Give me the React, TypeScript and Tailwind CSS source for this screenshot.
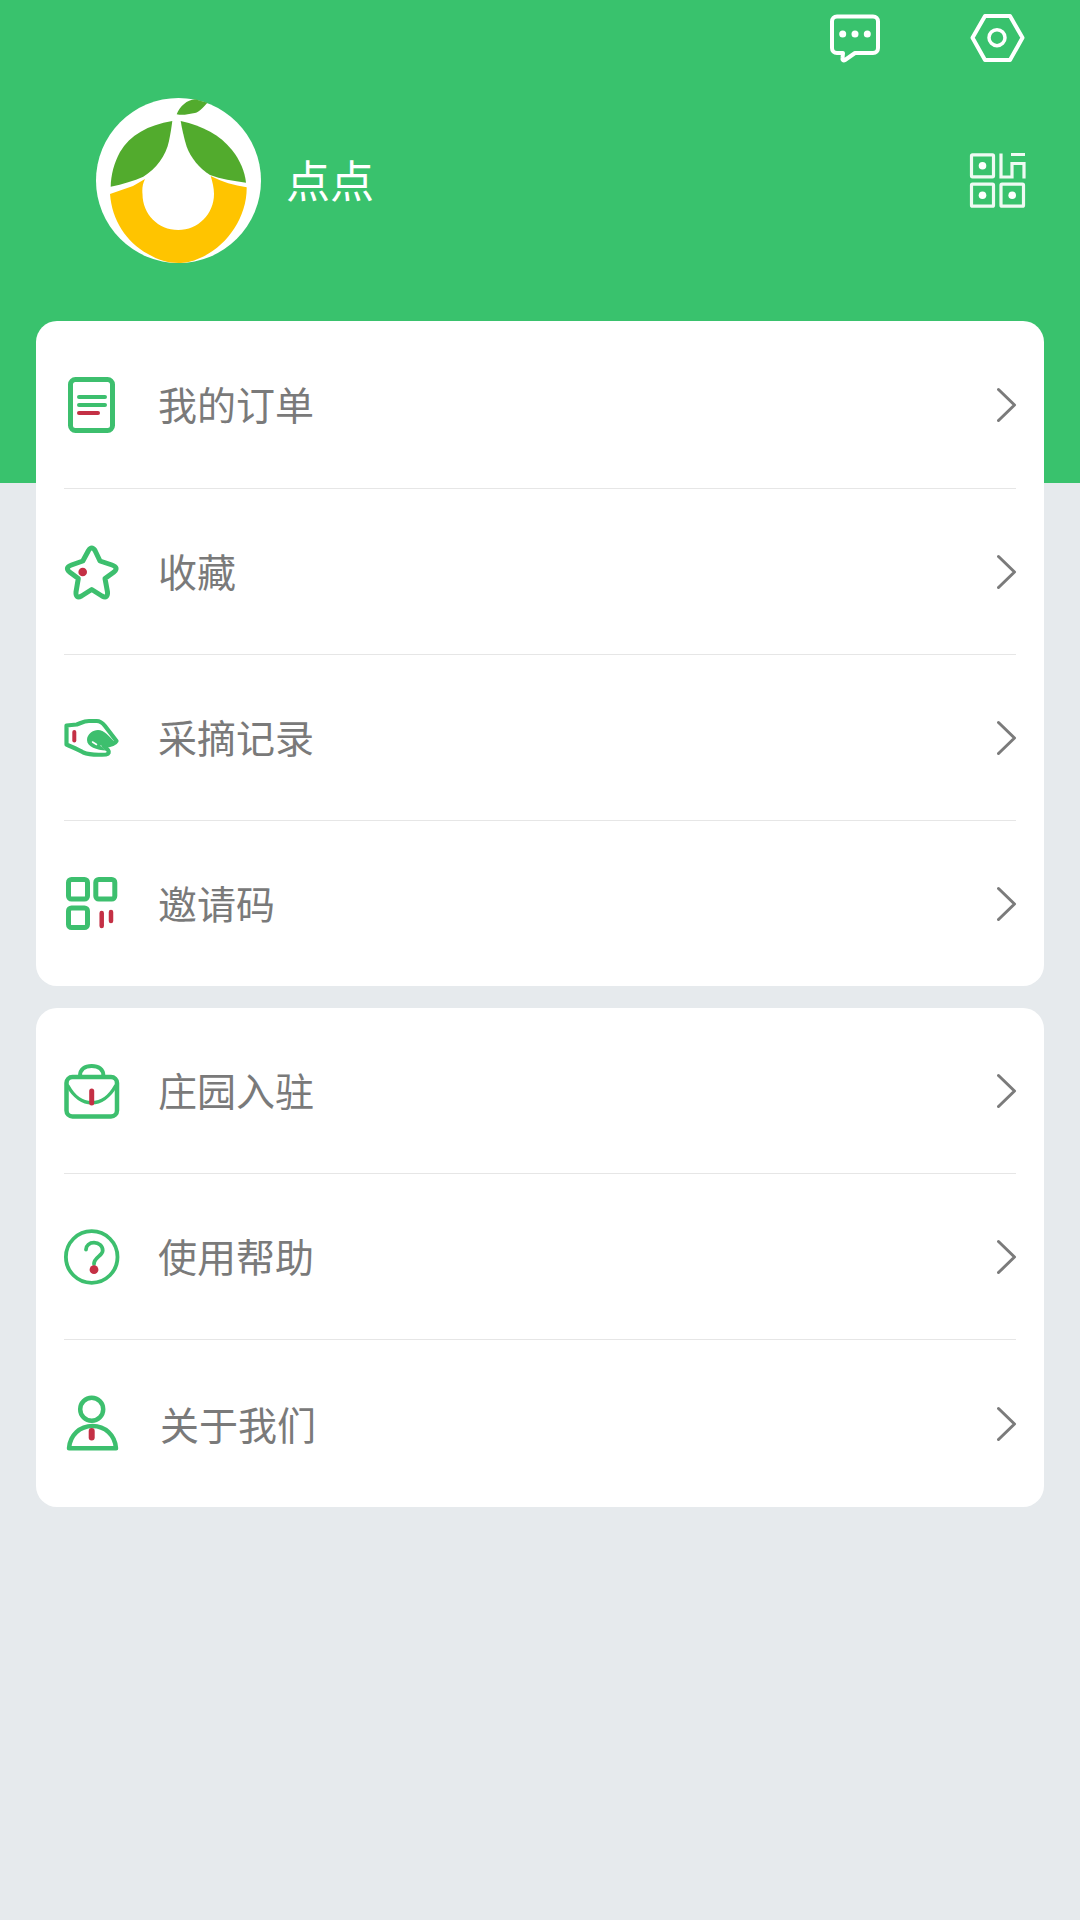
import React from "react";

const G = "#3dbf6e";
const R = "#c43045";

const Svg = ({ children }: { children: React.ReactNode }) => (
  <svg width="64" height="64" viewBox="0 0 64 64" fill="none" stroke={G} strokeWidth="5" strokeLinecap="round" strokeLinejoin="round" className="shrink-0">
    {children}
  </svg>
);

const DocIcon = () => (
  <Svg>
    <rect x="10.5" y="6.5" width="42" height="51" rx="5" />
    <path d="M19 24H45M19 32H45" strokeWidth="4" />
    <path d="M19 40H38" stroke={R} strokeWidth="4" />
  </Svg>
);
const StarIcon = () => (
  <Svg>
    <path d="M28.5 10.5Q31.7 5.5 35 10.5L40 21L52 25Q59 27.5 54 32L45 38.5L47.5 52Q48 59 42 56L31.7 49.5L21.5 56Q15.5 59 16 52L18.3 38.5L9.5 32Q4.5 27.5 11.5 25L22.8 21Z" strokeWidth="5" />
    <circle cx="22.7" cy="32" r="4.3" fill={R} stroke="none" />
  </Svg>
);
const HandIcon = () => (
  <Svg>
    <path d="M6.5 19.5L16.7 18.5C21 17 24 15 29 15H36.7C40 15 43 17.5 45 20L56.5 35C55 38 49 39.5 43.5 40L48 44C49.5 46 49 48 46 48.5C38 49 29 49 23.3 46.5C19 44 13 41.5 6.5 38.5Z" strokeWidth="4.2" />
    <path d="M27 34C27 28 33 24 38 24C44 24 49 30 55 36.5C49 39.5 43 40 40 39.5L46 44.5C37 44 27 41 27 34Z" fill={G} stroke="none" />
    <path d="M32.5 36L36.5 38.5" stroke="#fff" strokeWidth="1.5" />
    <path d="M14.3 26V34.5" stroke={R} strokeWidth="4" />
  </Svg>
);
const GridIcon = () => (
  <Svg>
    <rect x="8.5" y="7.5" width="19" height="19.5" rx="3" />
    <rect x="35.8" y="7.5" width="19" height="19.5" rx="3" />
    <rect x="8.5" y="36" width="19" height="19.5" rx="3" />
    <path d="M41.7 41V54M51 40V49" stroke={R} strokeWidth="4.5" />
  </Svg>
);
const BagIcon = () => (
  <Svg>
    <rect x="6.5" y="18" width="50.5" height="39.5" rx="6" strokeWidth="4.5" />
    <path d="M20 17C20 10 25 7 31.7 7C38.4 7 43.4 10 43.4 17" strokeWidth="4" />
    <path d="M8 27C14 38 23 43.7 31.7 43.7C40.4 43.7 49.4 38 55.5 27" strokeWidth="3.5" />
    <path d="M31.7 32V44" stroke={R} strokeWidth="5" />
  </Svg>
);
const HelpIcon = () => (
  <Svg>
    <circle cx="31.7" cy="32" r="25.8" strokeWidth="3.8" />
    <path d="M26 24.5C26 20.5 29.5 17.7 34 17.7C39 17.7 42.7 21 42.7 25.5C42.7 31 34 32 34 39" strokeWidth="3.8" />
    <circle cx="34" cy="44.7" r="4.4" fill={R} stroke="none" />
  </Svg>
);
const UserIcon = () => (
  <Svg>
    <circle cx="31.7" cy="17.2" r="11.5" strokeWidth="4.5" />
    <path d="M9 56.3C10 43 20 34 32.5 34C45 34 55 43 56 56.3Z" strokeWidth="4.5" />
    <path d="M31.7 39V45.5" stroke={R} strokeWidth="6" />
  </Svg>
);

const Chevron = () => (
  <svg width="20" height="36" viewBox="0 0 20 36" fill="none" stroke="#7b7b7b" strokeWidth="3" strokeLinecap="round" strokeLinejoin="round" className="ml-auto mr-[3px] shrink-0">
    <path d="M1.5 2.5L17.5 18L1.5 33.5" />
  </svg>
);

const Row = ({ icon, label, tall, last }: { icon: React.ReactNode; label: string; tall?: boolean; last?: boolean }) => (
  <div className={`flex ${tall ? "h-[167px]" : "h-[165px]"} items-center pl-[24px] pr-[24px]`}>
    {icon}
    <span className={`${last ? "ml-[36px]" : "ml-[34px] pb-[2px]"} text-[39px] leading-none text-[#7a7a7a]`}>{label}</span>
    <Chevron />
  </div>
);

const Divider = () => <div className="mx-[28px] h-px bg-[#e6e6e6]" />;

const Avatar = () => (
  <svg width="165" height="165" viewBox="0 0 165 165" className="shrink-0">
    <circle cx="82.5" cy="82.5" r="82.5" fill="#fff" />
    <path d="M80.7 16.3C84 8 91 2 99 1.3L111.3 4.7C106 11 102 15 97.3 15.3C92 16.5 86 17.5 80.7 16.3Z" fill="#52ab2d" />
    <path d="M76.3 23C52 27 34 37 24 54C18 65 15 77 14.7 88.7C27 86 38 83 47.3 78.7C60 71 70 58 73 43C74.5 36 75.5 29 76.3 23Z" fill="#52ab2d" />
    <path d="M84.7 23C107 28 124 37 136 52C144 62 149 74 150 84.7C137 83 125 81 114 77C103 70 95 60 90.7 48.7C88 40 86 31 84.7 23Z" fill="#52ab2d" />
    <path d="M14 96L37 88L49 81C46.5 86 46 91 46.5 96C46.5 116 62 132 82.3 132C102 132 118 116 118 96C118 90 116.5 84 114.7 78C126 84 138 87.5 150.7 89.3C151 120 130 149 104 160C96 164 89 165 82.5 165C72 165 62 162 52 156C30 144 16 122 14 96Z" fill="#ffc400" />
  </svg>
);

export default function App() {
  return (
    <div className="min-h-[1920px] bg-[#e6eaed] font-['Noto_Sans_CJK_SC','Noto_Sans',sans-serif]">
      <header className="h-[483px] bg-[#39c26d]">
        <div className="flex justify-end gap-[82px] pr-[53px] pt-[8px]">
          <svg width="60" height="60" viewBox="0 0 60 60" fill="none" stroke="#fff" strokeWidth="4" strokeLinejoin="round">
            <path d="M12 8.5H48C51 8.5 53 10.5 53 13.5V40C53 43 51 45 48 45H30L20 52C18.5 53 17 52 17.5 50L18 45H12C9 45 7 43 7 40V13.5C7 10.5 9 8.5 12 8.5Z" />
            <circle cx="17.7" cy="26" r="3.5" fill="#fff" stroke="none" />
            <circle cx="30" cy="26" r="3.5" fill="#fff" stroke="none" />
            <circle cx="42.3" cy="26" r="3.5" fill="#fff" stroke="none" />
          </svg>
          <svg width="60" height="60" viewBox="0 0 60 60" fill="none" stroke="#fff" strokeWidth="4" strokeLinejoin="round">
            <path d="M5.5 29.7L18 8H43L55.5 29.7L43 52H18Z" />
            <circle cx="30" cy="29.7" r="8" strokeWidth="3.5" />
          </svg>
        </div>
        <div className="mt-[30px] flex h-[165px] items-center pl-[96px] pr-[53px]">
          <Avatar />
          <span className="ml-[25px] pb-[3px] text-[44px] leading-none text-white">点点</span>
          <svg width="60" height="60" viewBox="0 1 60 60" fill="none" stroke="#fff" strokeOpacity="0.92" strokeWidth="3.2" className="ml-auto">
            <rect x="4.5" y="4.8" width="22" height="22" rx="1" />
            <rect x="4.5" y="34.2" width="22" height="22" rx="1" />
            <rect x="34" y="34.2" width="22.5" height="22" rx="1" />
            <path d="M34 3.5V27H45V13.5H57V28.5M44 4.5H58" />
            <circle cx="15.5" cy="15.8" r="3.8" fill="#fff" stroke="none" />
            <circle cx="15.5" cy="45.2" r="3.8" fill="#fff" stroke="none" />
            <circle cx="45.2" cy="45.2" r="3.8" fill="#fff" stroke="none" />
          </svg>
        </div>
      </header>

      <main className="relative -mt-[162px] flex flex-col gap-[22px] px-[36px]">
        <section className="rounded-[21px] bg-white">
          <Row icon={<DocIcon />} label="我的订单" tall />
          <Divider />
          <Row icon={<StarIcon />} label="收藏" />
          <Divider />
          <Row icon={<HandIcon />} label="采摘记录" />
          <Divider />
          <Row icon={<GridIcon />} label="邀请码" />
        </section>
        <section className="rounded-[21px] bg-white">
          <Row icon={<BagIcon />} label="庄园入驻" />
          <Divider />
          <Row icon={<HelpIcon />} label="使用帮助" />
          <Divider />
          <Row icon={<UserIcon />} label="关于我们" tall last />
        </section>
      </main>
    </div>
  );
}
